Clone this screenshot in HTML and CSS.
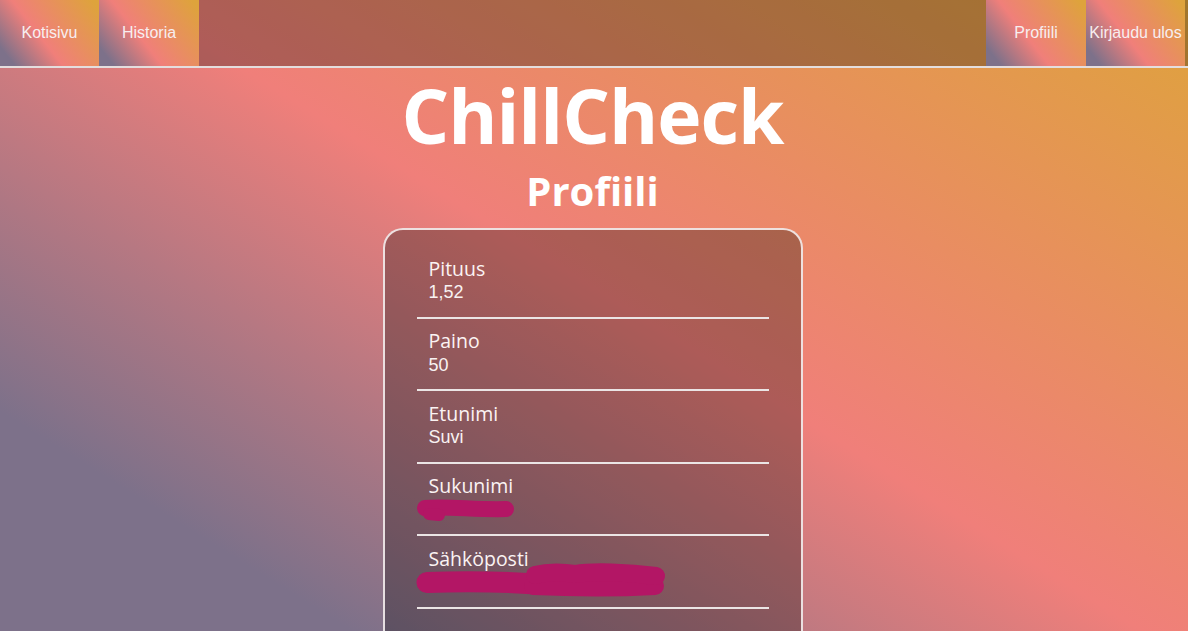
FILE: index.html
```html
<!DOCTYPE html>
<html lang="fi">
<head>
<meta charset="utf-8">
<title>ChillCheck – Profiili</title>
<link rel="stylesheet" href="styles.css">
</head>
<body>
<nav class="topnav">
  <div class="nav-group">
    <a class="nav-link nav-first" href="#">Kotisivu</a>
    <a class="nav-link" href="#">Historia</a>
  </div>
  <div class="nav-group nav-right">
    <a class="nav-link" href="#">Profiili</a>
    <a class="nav-link nav-last" href="#">Kirjaudu ulos</a>
  </div>
</nav>
<main class="main">
  <h1 class="title">ChillCheck</h1>
  <h2 class="subtitle">Profiili</h2>
  <section class="card">
    <div class="row">
      <div class="label">Pituus</div>
      <div class="value">1,52</div>
    </div>
    <div class="row">
      <div class="label">Paino</div>
      <div class="value">50</div>
    </div>
    <div class="row">
      <div class="label">Etunimi</div>
      <div class="value">Suvi</div>
    </div>
    <div class="row">
      <div class="label">Sukunimi</div>
      <div class="value">
        <svg class="scribble" width="100" height="22" viewBox="0 0 100 22" aria-hidden="true">
          <path d="M8 9 C30 7 60 11 89 10" />
          <path d="M12 15 L22 16" class="thin" />
        </svg>
      </div>
    </div>
    <div class="row">
      <div class="label">Sähköposti</div>
      <div class="value">
        <svg class="scribble" width="250" height="22" viewBox="0 0 250 22" aria-hidden="true">
          <path d="M10 11.5 C50 10 90 11 120 13" class="wide" />
          <path d="M116 15 C160 17 200 17 238 15" class="mid" />
          <path d="M118 4 C130 1 145 1 158 3 C175 0 210 1 239 5" class="mid" />
        </svg>
      </div>
    </div>
  </section>
</main>
</body>
</html>
```

FILE: styles.css
```css
html, body {
  margin: 0;
  padding: 0;
}

body {
  min-height: 100vh;
  font-family: "Liberation Sans", Arial, sans-serif;
  color: #fff;
  background: linear-gradient(32deg, #7d718a 16%, #f07f7a 52%, #dea33c 100%);
  background-attachment: fixed;
}

.topnav {
  display: flex;
  justify-content: space-between;
  height: 66px;
  background: rgba(0, 0, 0, 0.27);
  border-bottom: 2px solid #e4dede;
}

.nav-group {
  display: flex;
}

.nav-right {
  margin-right: 3px;
}

.nav-link {
  display: flex;
  align-items: center;
  justify-content: center;
  width: 100px;
  height: 66px;
  font-size: 16px;
  color: #f7eef0;
  text-decoration: none;
  white-space: nowrap;
  background: linear-gradient(52deg, #7d718a 10%, #f07f7a 42%, #dea33c 95%);
}

.nav-first,
.nav-last {
  width: 99px;
}

.main {
  text-align: center;
  padding-bottom: 40px;
  margin-right: 3px;
}

.title {
  margin: 9px 0 0;
  font-family: "Open Sans", "Noto Sans", sans-serif;
  font-weight: 700;
  font-size: 75px;
  line-height: 76px;
  letter-spacing: -1px;
  color: #fff;
}

.subtitle {
  margin: 18px 0 0;
  font-family: "Open Sans", "Noto Sans", sans-serif;
  font-weight: 700;
  font-size: 40px;
  line-height: 40px;
  color: #fff;
}

.card {
  box-sizing: border-box;
  width: 420px;
  margin: 17px auto 0;
  padding: 16px 32px 60px;
  text-align: left;
  border: 2px solid rgba(245, 238, 238, 0.9);
  border-radius: 20px;
  background: rgba(0, 0, 0, 0.28);
}

.row {
  padding: 9.5px 12px 13.5px;
  border-bottom: 2px solid #ebe5e5;
}

.label {
  font-family: "Open Sans", "Noto Sans", sans-serif;
  font-size: 19.5px;
  line-height: 25.5px;
  color: #fbf3f3;
}

.value {
  font-family: "Liberation Sans", Arial, sans-serif;
  font-size: 18px;
  line-height: 22px;
  height: 22px;
  color: #f8f2f2;
}

.scribble {
  display: block;
  margin-left: -12px;
  overflow: visible;
}

.scribble path {
  fill: none;
  stroke: #b31665;
  stroke-width: 16;
  stroke-linecap: round;
  stroke-linejoin: round;
}

.scribble path.thin {
  stroke-width: 12;
}

.scribble path.wide {
  stroke-width: 21;
}

.scribble path.mid {
  stroke-width: 18;
}
```
